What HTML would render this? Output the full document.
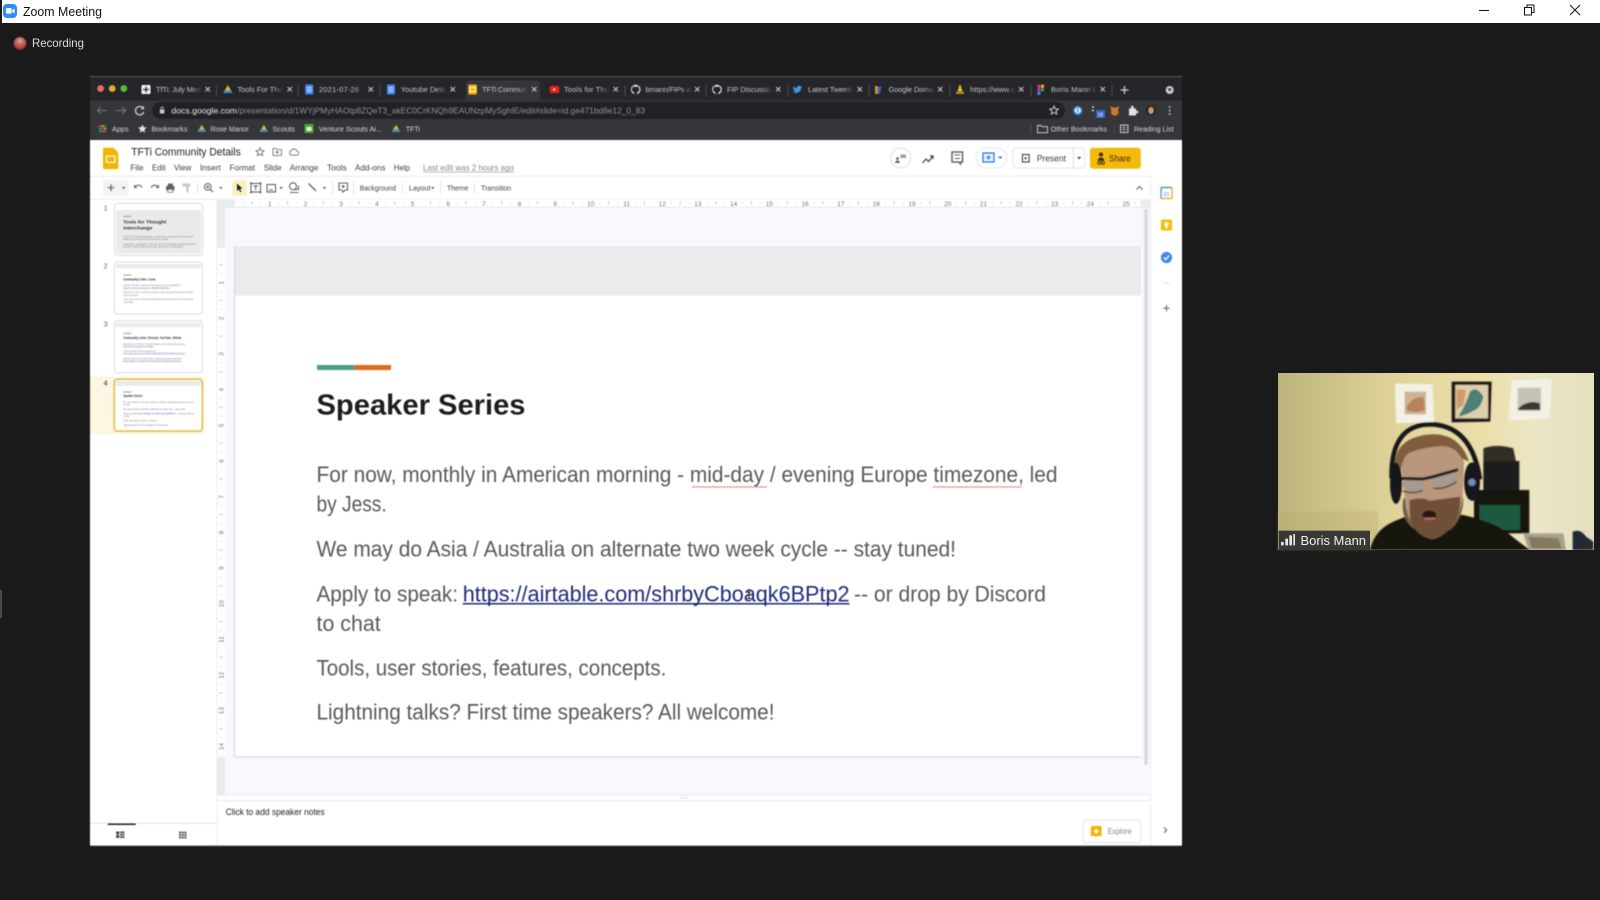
<!DOCTYPE html>
<html lang="en">
<head>
<meta charset="utf-8">
<title>Zoom Meeting</title>
<style>
html,body{margin:0;padding:0;background:#1a1a1a;width:1600px;height:900px;overflow:hidden}
svg{display:block;position:absolute;left:0;top:0;font-family:"Liberation Sans",sans-serif}
.tab{font-size:7.5px;fill:url(#fd)}
.x{stroke:#c8cacd;stroke-width:1;fill:none}
.bm{font-size:7.4px;fill:#d5d7da}
.mn{font-size:8.6px;fill:#3c4043}
.tb{font-size:7px;fill:#3c4043}
.ic{stroke:#5f6368;stroke-width:1.1;fill:none}
.rn{font-size:6.5px;fill:#6f7479;text-anchor:middle}
.b{font-size:22.4px;fill:#595959}
.t{font-size:2.3px;fill:#8a8a8a}
.l{font-size:2.3px;fill:#6a72b8}
.h{font-size:4.2px;font-weight:bold;fill:#333}
</style>
</head>
<body>
<svg width="1600" height="900" viewBox="0 0 1600 900" xmlns="http://www.w3.org/2000/svg">
<defs>
<linearGradient id="fd" x1="0" x2="1" y1="0" y2="0"><stop offset="0" stop-color="#c2c4c8"/><stop offset=".78" stop-color="#c2c4c8"/><stop offset="1" stop-color="#c2c4c8" stop-opacity=".1"/></linearGradient>
<linearGradient id="wall" x1="0" x2="1" y1="0" y2="0"><stop offset="0" stop-color="#bdb57e"/><stop offset=".2" stop-color="#cfc58c"/><stop offset=".42" stop-color="#e3d79e"/><stop offset=".65" stop-color="#ebdfa9"/><stop offset=".82" stop-color="#ebe6c4"/><stop offset="1" stop-color="#e4dfc0"/></linearGradient>
<radialGradient id="rec" cx=".5" cy=".32" r=".7"><stop offset="0" stop-color="#d8b0a8"/><stop offset=".4" stop-color="#c4675c"/><stop offset="1" stop-color="#ad2a20"/></radialGradient>
<pattern id="wave" x="0" y="0" width="3" height="2" patternUnits="userSpaceOnUse"><path d="M0 1.6 L1.5 .4 L3 1.6" stroke="#d9534f" stroke-width=".55" fill="none"/></pattern>
<pattern id="rh" x="234.1" y="199" width="35.68" height="8" patternUnits="userSpaceOnUse"><rect x="8.6" y="3.6" width=".8" height=".8" fill="#9aa0a6"/><rect x="17.5" y="2.2" width=".7" height="3.6" fill="#b0b4b8"/><rect x="26.5" y="3.6" width=".8" height=".8" fill="#9aa0a6"/></pattern>
<pattern id="rv" x="217" y="247" width="8" height="35.68" patternUnits="userSpaceOnUse"><rect x="3.6" y="8.6" width=".8" height=".8" fill="#9aa0a6"/><rect x="2.2" y="17.5" width="3.6" height=".7" fill="#b0b4b8"/><rect x="3.6" y="26.5" width=".8" height=".8" fill="#9aa0a6"/></pattern>
<filter id="bl" x="-20%" y="-20%" width="140%" height="140%"><feGaussianBlur stdDeviation="3"/></filter>
<filter id="bl2" x="-20%" y="-20%" width="140%" height="140%"><feGaussianBlur stdDeviation="2.4"/></filter>
</defs>

<rect width="1600" height="900" fill="#1a1a1a"/>
<!-- title bar -->
<rect x="2" y="0" width="1598" height="23" fill="#fff"/>
<rect x="3" y="4" width="14" height="14" rx="4" fill="#2d8cff"/>
<rect x="6" y="8" width="5.6" height="5.6" rx="1" fill="#fff"/><path d="M12.2 10.3l2.4-1.8v5l-2.4-1.8z" fill="#fff"/>
<text x="23" y="16" font-size="13" fill="#111" textLength="79" lengthAdjust="spacingAndGlyphs">Zoom Meeting</text>
<path d="M1479 10.5h10" stroke="#111" stroke-width="1"/>
<path d="M1524.5 7.5h7v7.500h-7zM1527 7.500v-2.500h7v7.500h-2.500" stroke="#111" stroke-width="1" fill="none"/>
<path d="M1570 5l10 10M1580 5l-10 10" stroke="#111" stroke-width="1" fill="none"/>
<rect x="0" y="590" width="2" height="28" fill="#4a4a4a"/>

<!-- recording -->
<circle cx="20" cy="43.300" r="6.300" fill="url(#rec)" style="filter:blur(.4px)"/>
<text x="32" y="47" font-size="12" fill="#dedede" textLength="52" lengthAdjust="spacingAndGlyphs">Recording</text>

<!-- browser -->
<g style="filter:blur(.4px)">
<rect x="90" y="76" width="1092" height="770" fill="#fff"/>
<rect x="90" y="76" width="1092" height="24.500" fill="#25262a"/>
<rect x="90" y="76" width="1092" height="1" fill="#55565a"/>
<rect x="90" y="100.500" width="1092" height="40" fill="#35363a"/>
<circle cx="100.600" cy="88.500" r="3.400" fill="#ed6a5e"/><circle cx="112.200" cy="88.500" r="3.400" fill="#e0ad2e"/><circle cx="123.800" cy="88.500" r="3.400" fill="#57c038"/>
<path d="M462 100.500q4 0 4-4v-12q0-4 4-4h66q4 0 4 4v12q0 4 4 4z" fill="#35363a"/>

<path d="M216.500 85v11M298 85v11M380 85v11M625 85v11M706 85v11M788 85v11M869 85v11M950 85v11M1031 85v11M1112 85v11" stroke="#54565a" stroke-width=".8"/>

<g transform="translate(0,1)">
<rect x="141.500" y="84" width="9" height="9" rx="1" fill="#f5f5f5"/><path d="M146 85.500v6M143 88.500h6" stroke="#222" stroke-width="1.200"/>
<path d="M227.800 84l4.600 8h-9.200z" fill="#fbbc04"/><path d="M223.200 92h9.200l-1.600-2.600h-6z" fill="#4285f4"/><path d="M227.800 84l-4.600 8 1.600-2.600 3.800-5.400z" fill="#0f9d58"/>
<rect x="305.200" y="83.500" width="8" height="10" rx="1" fill="#4285f4"/><path d="M306.700 86.500h5M306.700 88.500h5M306.700 90.500h5" stroke="#fff" stroke-width=".7"/>
<rect x="387" y="83.500" width="8" height="10" rx="1" fill="#4285f4"/><path d="M388.500 86.500h5M388.500 88.500h5M388.500 90.500h5" stroke="#fff" stroke-width=".7"/>
<rect x="468.300" y="83.500" width="8.600" height="10" rx="1" fill="#f4b400"/><rect x="469.800" y="86.500" width="5.600" height="4" fill="none" stroke="#fff" stroke-width=".9"/>
<rect x="549.700" y="85" width="9.600" height="7" rx="1.800" fill="#e62117"/><path d="M553.400 87v3l2.400-1.500z" fill="#fff"/>
<circle cx="635.700" cy="88.500" r="4.800" fill="#f0f0f0"/><path d="M634 93v-1.800q-2.500-.8-2.200-3 .2-1.200 1-1.800 0-1.200.3-1.300l1.300.6h2.400l1.300-.6q.4.200.3 1.300.8.600 1 1.800.2 2.300-2.200 3V93z" fill="#25262a"/>
<circle cx="717" cy="88.500" r="4.800" fill="#f0f0f0"/><path d="M715.300 93v-1.800q-2.500-.8-2.200-3 .2-1.200 1-1.800 0-1.200.3-1.300l1.300.6h2.400l1.300-.6q.4.200.3 1.300.8.600 1 1.800.2 2.300-2.200 3V93z" fill="#25262a"/>
<path d="M794 86q1.300.9 3 1 0-2.300 2-2.200 1 0 1.500.6l1.200-.4-.7 1.100.9-.2-.8 1q0 4-4.300 5-2.400.3-3.800-.8 1.500 0 2.700-.9-1.900-.2-2.200-1.500h.9q-1.300-.5-1.500-1.900l.9.2q-.9-1-.3-2z" fill="#3c9be6"/>
<path d="M875 84.500l5 2-1.800 6.500h-3z" fill="#ea9a1c"/><path d="M877.500 86l4-.5-1.800 7-2.300.5z" fill="#3a66c9"/>
<path d="M956 92h8M957.500 90h5M960 84l1.500 6h-3z" stroke="#f3c21a" stroke-width="1.200" fill="#f3c21a"/>
<rect x="1037.500" y="83.800" width="3" height="3" fill="#e94235"/><rect x="1041" y="83.800" width="3" height="3" fill="#fbbc04"/><rect x="1037.500" y="87.300" width="3" height="3" fill="#a142f4"/><rect x="1041" y="87.300" width="3" height="3" fill="#34a853"/><rect x="1037.500" y="90.800" width="3" height="3" fill="#4285f4"/>

<text class="tab" x="156" y="91" textLength="45">TfTi: July Mee</text>
<text class="tab" x="237.500" y="91" textLength="45">Tools For Tho</text>
<text class="tab" x="319" y="91" textLength="45">2021-07-28 -</text>
<text class="tab" x="400.700" y="91" textLength="45">Youtube Deta</text>
<text class="tab" x="482" y="91" textLength="45">TFTi Commun</text>
<text class="tab" x="564" y="91" textLength="45">Tools for Tho</text>
<text class="tab" x="645.500" y="91" textLength="45">bmann/FIPs a</text>
<text class="tab" x="727" y="91" textLength="45">FIP Discussio</text>
<text class="tab" x="808" y="91" textLength="45">Latest Tweets</text>
<text class="tab" x="888.500" y="91" textLength="45">Google Doma</text>
<text class="tab" x="970" y="91" textLength="45">https://www.c</text>
<text class="tab" x="1051" y="91" textLength="45">Boris Mann's</text>
<path class="x" d="M205.500 86l4.500 4.500M210 86l-4.500 4.500M287.500 86l4.500 4.500M292 86l-4.500 4.500M368.500 86l4.500 4.500M373 86l-4.500 4.500M450.500 86l4.500 4.500M455 86l-4.500 4.500M532 86l4.500 4.500M536.500 86l-4.500 4.500M613.500 86l4.500 4.500M618 86l-4.500 4.500M695 86l4.500 4.500M699.500 86l-4.500 4.500M776 86l4.500 4.500M780.500 86l-4.500 4.500M857.500 86l4.500 4.500M862 86l-4.500 4.500M938 86l4.500 4.500M942.500 86l-4.500 4.500M1019 86l4.500 4.500M1023.500 86l-4.500 4.500M1100.500 86l4.500 4.500M1105 86l-4.500 4.500"/>
</g>
<path d="M1120.500 90h8M1124.500 86v8" stroke="#d4d6d9" stroke-width="1.200"/>
<circle cx="1169.700" cy="90" r="4" fill="#c9cbce"/><path d="M1167.500 88.500h4.400l-2.200 3z" fill="#35363a"/>

<!-- toolbar -->
<path d="M107 110.500h-9M101 107l-3.500 3.500 3.500 3.500" stroke="#75777b" stroke-width="1.100" fill="none"/>
<path d="M116.500 110.500h9M122 107l3.500 3.500-3.500 3.500" stroke="#75777b" stroke-width="1.100" fill="none"/>
<path d="M143.300 108.500a4.200 4.200 0 1 0 .4 3.500" stroke="#d4d6d9" stroke-width="1.200" fill="none"/><path d="M144 105.800v3.400h-3.400z" fill="#d4d6d9"/>
<rect x="152" y="102" width="913" height="17" rx="8.500" fill="#202124"/>
<rect x="159.800" y="109.500" width="4.600" height="4" rx=".6" fill="#c8cacd"/><path d="M160.800 109.500v-1.200a1.300 1.300 0 0 1 2.600 0v1.200" stroke="#c8cacd" stroke-width=".7" fill="none"/>
<text x="171.400" y="113.500" font-size="8.400" fill="#e8eaed" textLength="65.600" lengthAdjust="spacingAndGlyphs">docs.google.com</text>
<text x="237" y="113.500" font-size="8.400" fill="#8f9296" textLength="408" lengthAdjust="spacingAndGlyphs">/presentation/d/1WYjPMyHAOtp8ZQeT3_akEC0CrKNQh9EAUNzpMySghIE/edit#slide=id.ge471bd8e12_0_83</text>
<path d="M1054 106l1.300 2.800 3 .3-2.300 2 .7 3-2.700-1.600-2.700 1.600.7-3-2.300-2 3-.3z" fill="none" stroke="#dadce0" stroke-width=".9"/>
<circle cx="1077.800" cy="110.500" r="4.600" fill="#3d8cdb"/><circle cx="1077.800" cy="110.500" r="2.900" fill="#fff"/><rect x="1077" y="108.500" width="1.600" height="4" fill="#3d8cdb"/>
<circle cx="1093" cy="107" r="1" fill="#d5d5d5"/><circle cx="1093" cy="110.500" r="1" fill="#d5d5d5"/><rect x="1096" y="110" width="9" height="8" rx="1" fill="#3767c4"/><text x="1097.500" y="116.500" font-size="5" fill="#fff">18</text>
<path d="M1110.500 106l3 1.500h2.500l3-1.500-.8 4 .5 3-2.200 2.500h-3.500l-2.200-2.500.5-3z" fill="#d6762a"/>
<path d="M1129 108.500h2v-1.500a1.300 1.300 0 0 1 2.600 0v1.500h2.400v2.200h1a1.300 1.300 0 0 1 0 2.600h-1v2.200h-7z" fill="#e2e3e5"/>
<circle cx="1151" cy="110.500" r="5.200" fill="#2b2320"/><ellipse cx="1151" cy="110.500" rx="2.800" ry="3.600" fill="#c69a6f"/>
<circle cx="1169.700" cy="107" r=".9" fill="#d8dade"/><circle cx="1169.700" cy="110.500" r=".9" fill="#d8dade"/><circle cx="1169.700" cy="114" r=".9" fill="#d8dade"/>

<!-- bookmarks -->
<g>
<rect x="99" y="125.200" width="1.900" height="1.900" fill="#ea4335"/><rect x="101.600" y="125.200" width="1.900" height="1.900" fill="#fbbc04"/><rect x="104.200" y="125.200" width="1.900" height="1.900" fill="#34a853"/>
<rect x="99" y="127.800" width="1.900" height="1.900" fill="#4285f4"/><rect x="101.600" y="127.800" width="1.900" height="1.900" fill="#ea4335"/><rect x="104.200" y="127.800" width="1.900" height="1.900" fill="#fbbc04"/>
<rect x="99" y="130.400" width="1.900" height="1.900" fill="#34a853"/><rect x="101.600" y="130.400" width="1.900" height="1.900" fill="#4285f4"/><rect x="104.200" y="130.400" width="1.900" height="1.900" fill="#ea4335"/>
</g>
<text class="bm" x="112" y="131.500" textLength="16.600" lengthAdjust="spacingAndGlyphs">Apps</text>
<path d="M142.400 124.500l1.300 2.800 3 .3-2.300 2 .7 3-2.700-1.600-2.700 1.600.7-3-2.300-2 3-.3z" fill="#e3e4e6"/>
<text class="bm" x="151.500" y="131.500" textLength="36" lengthAdjust="spacingAndGlyphs">Bookmarks</text>
<path d="M201.700 124.500l4.200 7.200h-8.400z" fill="#fbbc04"/><path d="M197.500 131.700h8.400l-1.500-2.500h-5.400z" fill="#4285f4"/><path d="M201.700 124.500l-4.200 7.200 1.700-2.500 3.200-4z" fill="#0f9d58"/>
<text class="bm" x="210.500" y="131.500" textLength="38.300" lengthAdjust="spacingAndGlyphs">Rose Manor</text>
<path d="M263.700 124.500l4.200 7.200h-8.400z" fill="#fbbc04"/><path d="M259.500 131.700h8.400l-1.500-2.500h-5.400z" fill="#4285f4"/><path d="M263.700 124.500l-4.200 7.200 1.700-2.500 3.200-4z" fill="#0f9d58"/>
<text class="bm" x="272.500" y="131.500" textLength="22.500" lengthAdjust="spacingAndGlyphs">Scouts</text>
<rect x="304.500" y="124" width="9" height="9" rx="1" fill="#46a832"/><rect x="306.500" y="127" width="5" height="4" fill="#e8f6e0"/>
<text class="bm" x="318.800" y="131.500" textLength="63.200" lengthAdjust="spacingAndGlyphs">Venture Scouts Ai...</text>
<path d="M396 124.500l4.200 7.200h-8.400z" fill="#fbbc04"/><path d="M391.800 131.700h8.400l-1.500-2.500h-5.400z" fill="#4285f4"/><path d="M396 124.500l-4.200 7.200 1.700-2.500 3.200-4z" fill="#0f9d58"/>
<text class="bm" x="405.700" y="131.500" textLength="14.300" lengthAdjust="spacingAndGlyphs">TFTi</text>
<path d="M1031 124v10M1114 124v10" stroke="#55565a" stroke-width=".8"/>
<path d="M1037.500 125.500h3.500l1 1.200h5.500v6h-10z" fill="none" stroke="#d5d7da" stroke-width=".9"/>
<text class="bm" x="1050.800" y="131.500" textLength="56.200" lengthAdjust="spacingAndGlyphs">Other Bookmarks</text>
<rect x="1120.500" y="125" width="7.500" height="7.500" fill="none" stroke="#d5d7da" stroke-width=".9"/><path d="M1124.200 125v7.500M1121.500 127.500h2M1121.500 129.500h2M1125 127.500h2M1125 129.500h2" stroke="#d5d7da" stroke-width=".6"/>
<text class="bm" x="1133.900" y="131.500" textLength="39.800" lengthAdjust="spacingAndGlyphs">Reading List</text>

<!-- slides header -->
<rect x="90" y="140" width="1092" height="706" fill="#fff"/>
<path d="M103 149.300a1.500 1.500 0 0 1 1.500-1.500h9l4.800 5v14.800a1.500 1.500 0 0 1-1.500 1.500h-12.300a1.500 1.500 0 0 1-1.500-1.500z" fill="#f4b400"/>
<rect x="106.500" y="156" width="8.300" height="6.400" fill="none" stroke="#fff" stroke-width="1.200"/>
<text x="131.300" y="155.300" font-size="11" fill="#202124" textLength="109.400" lengthAdjust="spacingAndGlyphs">TFTi Community Details</text>
<path d="M260 147.800l1.200 2.700 2.900.3-2.200 1.900.7 2.900-2.600-1.500-2.600 1.500.7-2.900-2.200-1.900 2.900-.3z" fill="none" stroke="#5f6368" stroke-width=".8"/>
<path d="M273 148.500h3l1 1h4.500v6h-8.500zM277.200 150.500v3.500M275.500 152.200h3.500" fill="none" stroke="#5f6368" stroke-width=".8"/>
<path d="M291.500 155.200h5a2 2 0 0 0 .4-4 3 3 0 0 0-5.600-.6 2.400 2.400 0 0 0 .2 4.600z" fill="none" stroke="#5f6368" stroke-width=".8"/>

<text class="mn" x="130.500" y="170.300" textLength="13" lengthAdjust="spacingAndGlyphs">File</text>
<text class="mn" x="152" y="170.300" textLength="13.700" lengthAdjust="spacingAndGlyphs">Edit</text>
<text class="mn" x="174" y="170.300" textLength="17.400" lengthAdjust="spacingAndGlyphs">View</text>
<text class="mn" x="200" y="170.300" textLength="20.800" lengthAdjust="spacingAndGlyphs">Insert</text>
<text class="mn" x="229.600" y="170.300" textLength="25.400" lengthAdjust="spacingAndGlyphs">Format</text>
<text class="mn" x="263.700" y="170.300" textLength="18" lengthAdjust="spacingAndGlyphs">Slide</text>
<text class="mn" x="289.700" y="170.300" textLength="28.700" lengthAdjust="spacingAndGlyphs">Arrange</text>
<text class="mn" x="327" y="170.300" textLength="19.700" lengthAdjust="spacingAndGlyphs">Tools</text>
<text class="mn" x="355" y="170.300" textLength="30.400" lengthAdjust="spacingAndGlyphs">Add-ons</text>
<text class="mn" x="393.800" y="170.300" textLength="16.200" lengthAdjust="spacingAndGlyphs">Help</text>
<text x="423" y="170.300" font-size="8.300" fill="#80868b" textLength="91" lengthAdjust="spacingAndGlyphs">Last edit was 2 hours ago</text>
<path d="M423 172h91" stroke="#9aa0a6" stroke-width=".7"/>

<!-- header right -->
<circle cx="900.800" cy="158" r="10" fill="#fff" stroke="#dadce0"/>
<path d="M900.500 154.500h5.500v3.500h-5.500z" fill="#9aa0a6"/><circle cx="897.500" cy="158.500" r="1.400" fill="#5f6368"/><path d="M895 163q.4-2.500 2.500-2.500t2.500 2.500z" fill="#5f6368"/>
<path d="M922.500 163l3.500-4 2.500 2.500 4-4.800M930 156h3v3" stroke="#3c4043" stroke-width="1.200" fill="none"/>
<path d="M952 152h10.500v10h-2v2l-2-2H952z" fill="none" stroke="#5f6368" stroke-width="1.500"/><path d="M954.500 155h5.500M954.500 158.500h5.500" stroke="#5f6368" stroke-width="1"/>
<rect x="976" y="148" width="30.800" height="20" rx="10" fill="#fff" stroke="#e3e5e8"/>
<rect x="983" y="153" width="11" height="9" fill="#e8f0fe" stroke="#1a73e8" stroke-width="1.200"/><path d="M988.500 155.500v4M986.500 157.500h4" stroke="#1a73e8" stroke-width="1.200"/><path d="M998 156.500h4.400l-2.200 2.500z" fill="#1a73e8"/>
<rect x="1013" y="148" width="72" height="20" rx="3" fill="#fff" stroke="#e3e5e8"/>
<path d="M1073.400 148v20" stroke="#dadce0"/>
<rect x="1022.500" y="154.500" width="6.600" height="7.500" fill="none" stroke="#3c4043" stroke-width="1.100"/><path d="M1024.800 156.500v3.500l2.400-1.700z" fill="#3c4043"/>
<text x="1036.700" y="161.300" font-size="9.300" fill="#3c4043" textLength="29.300" lengthAdjust="spacingAndGlyphs">Present</text>
<path d="M1077 157h4.200l-2.100 2.400z" fill="#3c4043"/>
<rect x="1090" y="147.800" width="50.800" height="21" rx="3" fill="#f4ba0a"/>
<circle cx="1101" cy="154.500" r="2" fill="#3c2a00"/><path d="M1097.800 160.500q.3-3 3.200-3t3.200 3z" fill="#3c2a00"/><circle cx="1099.300" cy="162.700" r="1.500" fill="none" stroke="#3c2a00" stroke-width=".9"/><circle cx="1103" cy="162.700" r="1.500" fill="none" stroke="#3c2a00" stroke-width=".9"/>
<text x="1109" y="161.300" font-size="9.300" fill="#3c2a00" textLength="21.800" lengthAdjust="spacingAndGlyphs">Share</text>
<circle cx="1161.400" cy="158" r="9.300" fill="#1d1815"/><ellipse cx="1161.400" cy="158.800" rx="5" ry="6.300" fill="#c79a73"/><path d="M1157 161q4.400 5 8.800 0l-1 4h-6.800z" fill="#7a5535"/><path d="M1156.500 156h10" stroke="#222" stroke-width=".9"/>

<path d="M90 176.300h1060" stroke="#e3e5e8" stroke-width=".8"/>
<path d="M90 199.300h1060" stroke="#e3e5e8" stroke-width=".8"/>

<!-- toolbar icons -->
<rect x="103" y="180" width="25.600" height="15.700" rx="2" fill="#f1f3f4"/>
<path d="M111 184.500v6.500M107.700 187.700h6.600" stroke="#5f6368" stroke-width="1.200"/>
<path d="M122 187h3.600l-1.800 2.200z" fill="#5f6368"/>
<path d="M135 186.500q4-3 7 1" class="ic"/><path d="M134 184.500v3.500h3.500z" fill="#5f6368"/>
<path d="M158 186.500q-4-3-7 1" class="ic"/><path d="M159 184.500v3.500h-3.500z" fill="#5f6368"/>
<rect x="166" y="186" width="8.500" height="4.500" rx=".8" fill="#5f6368"/><rect x="167.800" y="183.500" width="5" height="2.500" fill="#5f6368"/><rect x="167.800" y="189.300" width="5" height="3" fill="#fff" stroke="#5f6368" stroke-width=".7"/>
<path d="M182.500 183.500h8v3h-8zM186 186.500h2.500v6h-2z" fill="#c6c9cc"/>
<path d="M197.500 182v12M333 182v12M353.600 182v12M402.600 182v12M440.500 182v12M474.500 182v12" stroke="#dadce0" stroke-width=".8"/>
<circle cx="207.800" cy="186.800" r="3.300" class="ic"/><path d="M210.200 189.200l2.800 2.800M206.300 186.800h3M207.800 185.300v3" class="ic"/>
<path d="M219 187h3.600l-1.800 2.200z" fill="#5f6368"/>
<rect x="232" y="180" width="15" height="15.700" rx="1" fill="#feefc3"/>
<path d="M237 183.500l5.500 5-2.500.3 1.500 2.800-1.300.7-1.400-2.900-1.800 1.700z" fill="#202124"/>
<rect x="251" y="183.500" width="9.500" height="8.500" class="ic"/><path d="M253.500 186h4.500M255.700 186v4" class="ic"/><path d="M250 183h2M259.500 183h2M250 192.500h2M259.500 192.500h2" stroke="#3c4043"/>
<rect x="267" y="184.500" width="8.500" height="7.500" class="ic"/><path d="M269 190h4" stroke="#5f6368"/>
<path d="M279.200 187h3.600l-1.800 2.200z" fill="#5f6368"/>
<circle cx="293" cy="186.300" r="3.500" class="ic"/><path d="M294 189.500h4.500v-4M290 192.500h8.500" class="ic"/>
<path d="M308.500 183.500l7.500 7.500" stroke="#5f6368" stroke-width="1.300"/>
<path d="M322.700 187h3.600l-1.800 2.200z" fill="#5f6368"/>
<path d="M339 183h8.500v7h-2.500l-1.700 2-1.700-2H339z" class="ic"/><path d="M343.200 184.800v3.500M341.400 186.500h3.500" class="ic"/>
<text class="tb" x="359.700" y="190.400" textLength="36.300" lengthAdjust="spacingAndGlyphs">Background</text>
<text class="tb" x="409" y="190.400" textLength="21.500" lengthAdjust="spacingAndGlyphs">Layout</text>
<path d="M431 187h3.600l-1.800 2.200z" fill="#5f6368"/>
<text class="tb" x="447" y="190.400" textLength="21.400" lengthAdjust="spacingAndGlyphs">Theme</text>
<text class="tb" x="481" y="190.400" textLength="30.300" lengthAdjust="spacingAndGlyphs">Transition</text>
<path d="M1136.500 189.500l3-3 3 3" stroke="#5f6368" stroke-width="1.100" fill="none"/>

<!-- filmstrip -->
<rect x="216.500" y="199" width=".8" height="647" fill="#e3e5e8"/>
<rect x="90" y="376.700" width="115" height="57.500" fill="#fdf6e3"/>
<text x="103.500" y="210.500" font-size="7.500" fill="#5f6368">1</text>
<text x="103.500" y="268.500" font-size="7.500" fill="#5f6368">2</text>
<text x="103.500" y="326.500" font-size="7.500" fill="#5f6368">3</text>
<text x="103.500" y="385.500" font-size="7.500" font-weight="bold" fill="#5f6368">4</text>

<rect x="114.500" y="203.300" width="88" height="52" rx="3" fill="#fff" stroke="#dadce0"/>
<rect x="116" y="210" width="85" height="43.500" fill="#eaeaeb"/>
<rect x="123.300" y="216" width="4" height=".8" fill="#47a08c"/><rect x="127.300" y="216" width="4" height=".8" fill="#e0691a"/>
<text class="h" x="123.300" y="223.300" textLength="43" lengthAdjust="spacingAndGlyphs">Tools for Thought</text>
<text class="h" x="123.300" y="229.500" textLength="29" lengthAdjust="spacingAndGlyphs">Interchange</text>
<text class="t" x="123.300" y="237.500" textLength="70" lengthAdjust="spacingAndGlyphs">Tools for Thought Interchange, a community of builders and researchers</text>
<text class="t" x="123.300" y="240" textLength="45" lengthAdjust="spacingAndGlyphs">sharing tools, research and community details</text>
<text class="t" x="123.300" y="245" textLength="72" lengthAdjust="spacingAndGlyphs">Knowledge management, notes and personal knowledge graphs connected</text>
<text class="t" x="123.300" y="247.500" textLength="60" lengthAdjust="spacingAndGlyphs">across many different tools, and open standards</text>

<rect x="114.500" y="262" width="88" height="52" rx="3" fill="#fff" stroke="#dadce0"/>
<rect x="116" y="264" width="85" height="4.300" fill="#eaeaeb"/>
<rect x="123.300" y="274.700" width="4" height=".8" fill="#47a08c"/><rect x="127.300" y="274.700" width="4" height=".8" fill="#e0691a"/>
<text class="h" x="123.300" y="280.500" textLength="32" lengthAdjust="spacingAndGlyphs" style="font-size:3.400px">Community Links: Luma</text>
<text class="t" x="123.300" y="286" textLength="57" lengthAdjust="spacingAndGlyphs">Luma for calendar, reminders and discussion, and event registration</text>
<text class="l" x="123.300" y="289" textLength="46" lengthAdjust="spacingAndGlyphs">https://lu.ma/community/com-nHzEkBTZVaRL8za</text>
<text class="t" x="123.300" y="293" textLength="70" lengthAdjust="spacingAndGlyphs">Subscribe to the community calendar to see all upcoming events and join</text>
<text class="t" x="123.300" y="296" textLength="15" lengthAdjust="spacingAndGlyphs">upcoming events</text>
<text class="t" x="123.300" y="300" textLength="70" lengthAdjust="spacingAndGlyphs">Luma, Zoom, and YouTube recordings will be posted afterward to the community</text>
<text class="t" x="123.300" y="303" textLength="10" lengthAdjust="spacingAndGlyphs">channels</text>

<rect x="114.500" y="320.700" width="88" height="52" rx="3" fill="#fff" stroke="#dadce0"/>
<rect x="116" y="322.700" width="85" height="4.300" fill="#eaeaeb"/>
<rect x="123.300" y="333" width="4" height=".8" fill="#47a08c"/><rect x="127.300" y="333" width="4" height=".8" fill="#e0691a"/>
<text class="h" x="123.300" y="338.800" textLength="58" lengthAdjust="spacingAndGlyphs" style="font-size:3.400px">Community Links: Discord, YouTube, Github</text>
<text class="t" x="123.300" y="345" textLength="62" lengthAdjust="spacingAndGlyphs">Discord Server is Tools for Thought Chatroom on the Fission Discord Server</text>
<text class="l" x="123.300" y="347.500" textLength="30" lengthAdjust="spacingAndGlyphs">https://discord.gg/tools-for-thought</text>
<text class="t" x="123.300" y="352" textLength="32" lengthAdjust="spacingAndGlyphs">YouTube Channel videos are uploaded to</text>
<text class="l" x="123.300" y="354.500" textLength="62" lengthAdjust="spacingAndGlyphs">https://www.youtube.com/channel/UCaZdMKLhPY3cVWMdGmLQ/videos</text>
<text class="t" x="123.300" y="359.500" textLength="58" lengthAdjust="spacingAndGlyphs">GitHub is where we host all our repos, tracking issues and contributions</text>
<text class="l" x="123.300" y="362" textLength="58" lengthAdjust="spacingAndGlyphs">https://github.com/tools-for-thought-interchange/discussions</text>

<rect x="114.300" y="379.300" width="88" height="51.800" rx="3" fill="#fff" stroke="#e8b93e" stroke-width="1.500"/>
<rect x="116" y="381" width="85" height="4.700" fill="#e9eaeb"/>
<rect x="123.300" y="391.600" width="4" height=".8" fill="#47a08c"/><rect x="127.300" y="391.600" width="4" height=".8" fill="#e0691a"/>
<text class="h" x="123.300" y="397" textLength="19" lengthAdjust="spacingAndGlyphs" style="font-size:3.400px">Speaker Series</text>
<text class="t" x="123.300" y="403" textLength="70" lengthAdjust="spacingAndGlyphs">For now, monthly in American morning - mid-day / evening Europe timezone, led</text>
<text class="t" x="123.300" y="405.500" textLength="7" lengthAdjust="spacingAndGlyphs">by Jess.</text>
<text class="t" x="123.300" y="410" textLength="62" lengthAdjust="spacingAndGlyphs">We may do Asia / Australia on alternate two week cycle -- stay tuned!</text>
<text class="t" x="123.300" y="414.500" textLength="14" lengthAdjust="spacingAndGlyphs">Apply to speak:</text>
<text class="l" x="137.500" y="414.500" textLength="38" lengthAdjust="spacingAndGlyphs">https://airtable.com/shrbyCboaqk6BPtp2</text>
<text class="t" x="176" y="414.500" textLength="18" lengthAdjust="spacingAndGlyphs">-- or drop by Discord</text>
<text class="t" x="123.300" y="417" textLength="6" lengthAdjust="spacingAndGlyphs">to chat</text>
<text class="t" x="123.300" y="421.500" textLength="34" lengthAdjust="spacingAndGlyphs">Tools, user stories, features, concepts.</text>
<text class="t" x="123.300" y="426" textLength="45" lengthAdjust="spacingAndGlyphs">Lightning talks? First time speakers? All welcome!</text>

<path d="M90 823.300h126.500" stroke="#e3e5e8"/>
<rect x="107.700" y="823.500" width="28" height="1.500" fill="#202124"/>
<rect x="116.200" y="831.500" width="3" height="2.900" fill="#3c4043"/><rect x="116.200" y="835" width="3" height="2.900" fill="#3c4043"/><rect x="120" y="831.500" width="4.500" height="1.600" fill="#3c4043"/><rect x="120" y="836.300" width="4.500" height="1.600" fill="#3c4043"/><rect x="120" y="834" width="4.500" height="1.400" fill="#3c4043"/>
<g fill="#5f6368"><rect x="179" y="831.500" width="2.100" height="2"/><rect x="181.700" y="831.500" width="2.100" height="2"/><rect x="184.400" y="831.500" width="2.100" height="2"/><rect x="179" y="834" width="2.100" height="2"/><rect x="181.700" y="834" width="2.100" height="2"/><rect x="184.400" y="834" width="2.100" height="2"/><rect x="179" y="836.500" width="2.100" height="2"/><rect x="181.700" y="836.500" width="2.100" height="2"/><rect x="184.400" y="836.500" width="2.100" height="2"/></g>

<!-- canvas -->
<rect x="217.300" y="207.300" width="932.700" height="587.700" fill="#f8f9fd"/>
<rect x="217.300" y="199.300" width="932.700" height="8" fill="#fff"/>
<rect x="217.300" y="199.300" width="17.700" height="8" fill="#ebecf0"/>
<rect x="1140.700" y="199.300" width="9.300" height="8" fill="#ebecf0"/>
<rect x="235" y="199.300" width="905.700" height="8" fill="url(#rh)"/>
<path d="M217 207.300h933" stroke="#e3e5e8" stroke-width=".8"/>
<rect x="217.300" y="207.300" width="7.700" height="587.700" fill="#ebecf0"/>
<rect x="217.300" y="248" width="7.700" height="509" fill="#fff"/>
<rect x="217.300" y="248" width="7.700" height="509" fill="url(#rv)"/>
<g>
<text class="rn" x="269.800" y="206">1</text><text class="rn" x="305.500" y="206">2</text><text class="rn" x="341.100" y="206">3</text><text class="rn" x="376.800" y="206">4</text><text class="rn" x="412.500" y="206">5</text><text class="rn" x="448.200" y="206">6</text><text class="rn" x="483.900" y="206">7</text><text class="rn" x="519.500" y="206">8</text><text class="rn" x="555.200" y="206">9</text><text class="rn" x="590.900" y="206">10</text><text class="rn" x="626.600" y="206">11</text><text class="rn" x="662.300" y="206">12</text><text class="rn" x="697.900" y="206">13</text><text class="rn" x="733.600" y="206">14</text><text class="rn" x="769.300" y="206">15</text><text class="rn" x="805" y="206">16</text><text class="rn" x="840.700" y="206">17</text><text class="rn" x="876.300" y="206">18</text><text class="rn" x="912" y="206">19</text><text class="rn" x="947.700" y="206">20</text><text class="rn" x="983.400" y="206">21</text><text class="rn" x="1019.100" y="206">22</text><text class="rn" x="1054.700" y="206">23</text><text class="rn" x="1090.400" y="206">24</text><text class="rn" x="1126.100" y="206">25</text>
<text class="rn" transform="translate(223.500,282.700) rotate(-90)">1</text><text class="rn" transform="translate(223.500,318.400) rotate(-90)">2</text><text class="rn" transform="translate(223.500,354) rotate(-90)">3</text><text class="rn" transform="translate(223.500,389.700) rotate(-90)">4</text><text class="rn" transform="translate(223.500,425.400) rotate(-90)">5</text><text class="rn" transform="translate(223.500,461.100) rotate(-90)">6</text><text class="rn" transform="translate(223.500,496.800) rotate(-90)">7</text><text class="rn" transform="translate(223.500,532.400) rotate(-90)">8</text><text class="rn" transform="translate(223.500,568.100) rotate(-90)">9</text><text class="rn" transform="translate(223.500,603.800) rotate(-90)">10</text><text class="rn" transform="translate(223.500,639.500) rotate(-90)">11</text><text class="rn" transform="translate(223.500,675.200) rotate(-90)">12</text><text class="rn" transform="translate(223.500,710.800) rotate(-90)">13</text><text class="rn" transform="translate(223.500,746.500) rotate(-90)">14</text>
</g>
<rect x="1144" y="209" width="4" height="556" rx="2" fill="#dadce0"/>

<!-- slide -->
<rect x="234.500" y="246" width="906.500" height="511" fill="#fff"/>
<path d="M234.500 246v511h906.500" fill="none" stroke="#d8dade" stroke-width="1.200"/>
<rect x="235" y="246" width="906" height="49.500" fill="#ebebed"/>
<rect x="317" y="365" width="37.300" height="5" fill="#47a08c"/>
<rect x="354.300" y="365" width="36.700" height="5" fill="#e0691a"/>
<text x="316.500" y="414.300" font-size="29" font-weight="bold" fill="#1d1d1f" textLength="209" lengthAdjust="spacingAndGlyphs">Speaker Series</text>
<text class="b" x="316.500" y="482" textLength="741" lengthAdjust="spacingAndGlyphs">For now, monthly in American morning - mid-day / evening Europe timezone, led</text>
<rect x="692" y="486" width="75" height="2" fill="url(#wave)"/>
<rect x="932.700" y="486" width="88.800" height="2" fill="url(#wave)"/>
<text class="b" x="316.500" y="511.500" textLength="70.200" lengthAdjust="spacingAndGlyphs">by Jess.</text>
<text class="b" x="316.500" y="556.500" textLength="639.500" lengthAdjust="spacingAndGlyphs">We may do Asia / Australia on alternate two week cycle -- stay tuned!</text>
<text class="b" x="316.500" y="601.300" textLength="141.500" lengthAdjust="spacingAndGlyphs">Apply to speak:</text>
<text x="462.700" y="601.300" font-size="22.400" fill="#1d2a78" textLength="386.800" lengthAdjust="spacingAndGlyphs">https://airtable.com/shrbyCboaqk6BPtp2</text>
<path d="M462.700 603.800h386.800" stroke="#1d2a78" stroke-width="1.500"/>
<text class="b" x="854" y="601.300" textLength="192" lengthAdjust="spacingAndGlyphs">-- or drop by Discord</text>
<text class="b" x="316.500" y="630.900" textLength="64.200" lengthAdjust="spacingAndGlyphs">to chat</text>
<text class="b" x="316.500" y="675.300" textLength="349.800" lengthAdjust="spacingAndGlyphs">Tools, user stories, features, concepts.</text>
<text class="b" x="316.500" y="719.700" textLength="458" lengthAdjust="spacingAndGlyphs">Lightning talks? First time speakers? All welcome!</text>
<path d="M749 589v9M747 598.500h4M747.500 592.500h3" stroke="#222" stroke-width="1" fill="none"/>

<!-- notes -->
<rect x="217.300" y="795" width="932.700" height="51" fill="#fff"/>
<path d="M217.300 795h932.700M217.300 800.800h932.700" stroke="#e3e5e8" stroke-width=".8"/>
<path d="M681 797.800h1.500M683.500 797.800h1.500M686 797.800h1.500" stroke="#b8bbbf" stroke-width=".8"/>
<text x="225.700" y="815" font-size="8.800" fill="#202124" textLength="99" lengthAdjust="spacingAndGlyphs">Click to add speaker notes</text>
<rect x="1083.300" y="820.300" width="57.400" height="22.400" rx="2" fill="#fff" stroke="#e3e5e8"/>
<path d="M1091 826.500q0-.5.500-.5h9.500q.5 0 .5.500v9.500h-4l-1.200 1-1.300-1h-4.500z" fill="#f4b400"/>
<path d="M1096.300 828l1 2.200 2.200 1-2.200 1-1 2.200-1-2.200-2.200-1 2.200-1z" fill="#fff"/>
<text x="1107.700" y="833.800" font-size="8" fill="#80868b" textLength="24" lengthAdjust="spacingAndGlyphs">Explore</text>

<!-- right sidebar -->
<rect x="1150.500" y="140" width="31.500" height="706" fill="#fff"/>
<path d="M1150.600 176v670" stroke="#e8eaed" stroke-width=".8"/>
<rect x="1161" y="187.500" width="11" height="11" rx="1" fill="#fff" stroke="#4285f4" stroke-width="1.200"/><path d="M1172 187.500v11h-11" fill="none" stroke="#fbbc04" stroke-width="1.200"/><path d="M1161 187.500h9" stroke="#34a853" stroke-width="1.200"/><text x="1163.300" y="196" font-size="5.500" fill="#4285f4">31</text>
<rect x="1161" y="219.500" width="11" height="11" rx="1" fill="#fbbc04"/><circle cx="1166.500" cy="224.300" r="2.300" fill="#fff"/><rect x="1165.300" y="226.600" width="2.400" height="1.600" fill="#fff"/>
<circle cx="1166.500" cy="257.500" r="5.600" fill="#4285f4"/><path d="M1163.800 257.500l2 2 3.500-4" stroke="#fff" stroke-width="1.300" fill="none"/>
<path d="M1163 283h7" stroke="#dadce0" stroke-width=".8"/>
<path d="M1166.500 305v6.500M1163.200 308.200h6.500" stroke="#5f6368" stroke-width="1"/>
<path d="M1164 827.500l2.700 2.700-2.700 2.700" stroke="#5f6368" stroke-width="1.100" fill="none"/>
<rect x="90" y="845.500" width="1092" height="1" fill="#55565a"/>
</g>

<!-- video -->
<g transform="translate(1270,365) scale(.33333)">
<rect x="24" y="24" width="948" height="531" fill="url(#wall)"/>
<rect x="24" y="440" width="300" height="115" fill="#b4a76c" opacity=".3" filter="url(#bl)"/>
<svg x="24" y="24" width="948" height="531" viewBox="24 24 948 531">
<g filter="url(#bl2)">
<path d="M375 55l113 3 4 112-114 5z" fill="#f4f1e6"/>
<rect x="404" y="80" width="64" height="68" fill="#cdb392"/>
<path d="M410 125q20-32 50-28l5 38q-30 12-55 0z" fill="#b9835a"/>
<path d="M545 50h120l-4 120-116 2z" fill="#1b1712"/>
<rect x="556" y="60" width="98" height="100" fill="#ded0ab"/>
<path d="M565 155q25-40 35-75 20-20 40 15-5 30-25 40-25 15-50 20z" fill="#4f7f78"/>
<path d="M560 72l28 3-8 45-20 12z" fill="#cf9a6c"/>
<path d="M725 45l120-3-5 118-125 8z" fill="#f3f0e4"/>
<rect x="743" y="68" width="70" height="70" fill="#c6c3b6"/>
<path d="M745 130q30-28 65-15v20h-65z" fill="#3a3935"/>
<path d="M640 250q40-15 90 0l8 40H640z" fill="#302d27"/>
<rect x="640" y="288" width="108" height="100" fill="#1c1b1a"/>
<rect x="612" y="375" width="166" height="130" fill="#131211"/>
<rect x="628" y="420" width="122" height="75" fill="#1d5a41"/>
<path d="M760 505h120l8 50H775z" fill="#a9a28d"/>
<path d="M775 515l90 5 10 30-90 0z" fill="#857a60"/>
<path d="M908 500q25-10 40 15l22 15v25h-62z" fill="#222a36"/>
<path d="M300 555q12-55 60-80 35-18 80-30l140 5q90 20 135 55 30 25 65 50z" fill="#141211"/>
<path d="M400 400q-10 60 30 90l110 5q40-35 40-95z" fill="#6f5a48"/>
<path d="M392 290q0-70 90-72 85 0 100 75l-4 110q-15 90-90 115-65-10-80-90z" fill="#b8977c"/>
<path d="M374 300q2-82 105-92 90-5 118 82l-22-10q-22-42-70-36-50 4-85 18-22 12-28 56z" fill="#7f5c3e"/>
<path d="M365 340q-4-160 115-162 125 2 150 165" fill="none" stroke="#18181c" stroke-width="14"/>
<path d="M418 405q45-10 60 2 35-4 92-12 6 45-25 90-30 35-60 38-50-12-65-60z" fill="#6f5038"/>
<ellipse cx="478" cy="450" rx="21" ry="14" fill="#2a1412"/>
<rect x="462" y="458" width="34" height="6" rx="3" fill="#b5705e"/>
<ellipse cx="430" cy="358" rx="34" ry="22" fill="#a59b90"/>
<ellipse cx="522" cy="345" rx="40" ry="22" fill="#a59b90"/>
<path d="M388 340l70 2 28 -6 78-22" fill="none" stroke="#1a1817" stroke-width="9"/>
<path d="M398 378q30 10 60 -2M490 370q35 4 70-20" fill="none" stroke="#3a3531" stroke-width="4"/>
<ellipse cx="606" cy="350" rx="24" ry="58" fill="#12141a"/>
<circle cx="606" cy="352" r="11" fill="#7389b6"/>
<ellipse cx="378" cy="355" rx="18" ry="62" fill="#12141a"/>
<circle cx="597" cy="412" r="6" fill="#d8d8d8"/>
</g>
</svg>
<rect x="26" y="497" width="274" height="58" fill="#2e2e2e" opacity=".92"/>
<path d="M33 531h8v10h-8zM46 521h8v20h-8zM58 511h8v30h-8zM70 507h5v34h-5z" fill="#e8e8e8"/>
</g>
<text x="1300.500" y="545" font-size="13" fill="#f0f0f0" textLength="65.500">Boris Mann</text>
</svg>
</body>
</html>
